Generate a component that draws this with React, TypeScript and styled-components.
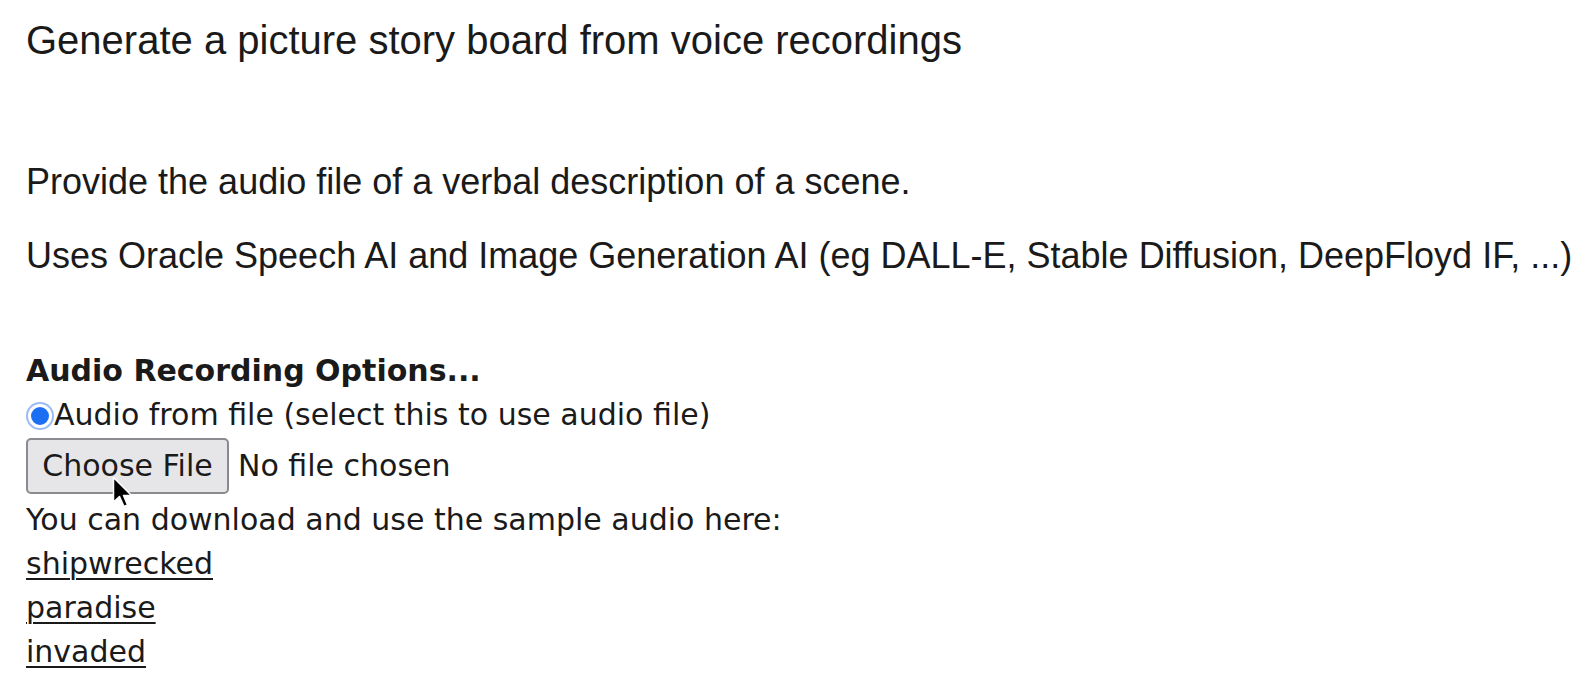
import React from "react";
import styled, { createGlobalStyle } from "styled-components";

const Global = createGlobalStyle`
  html, body { margin: 0; padding: 0; background: #fff; }
  body { font-family: "Liberation Sans", Arial, sans-serif; color: #1a1a1a; }
`;

const Page = styled.div`
  position: relative;
  padding: 16px 0 0 26px;
  width: 1584px;
  height: 700px;
  box-sizing: border-box;
  overflow: hidden;
`;

const Title = styled.div`
  font-size: 40px;
  line-height: 48px;
  white-space: nowrap;
`;

const Para = styled.p<{ $top: number }>`
  margin: ${(p) => p.$top}px 0 0 0;
  font-size: 36px;
  line-height: 44px;
  white-space: nowrap;
`;

const Options = styled.div`
  margin-top: 71px;
  font-family: "DejaVu Sans", Verdana, sans-serif;
  font-size: 30px;
  display: flex;
  flex-direction: column;
  align-items: flex-start;
`;

const Heading = styled.div`
  font-weight: bold;
  line-height: 44px;
`;

const RadioRow = styled.label`
  display: flex;
  align-items: center;
  line-height: 44px;
`;

const Radio = styled.span`
  width: 24px;
  height: 24px;
  border-radius: 50%;
  background: #1c6ef2;
  border: 3px solid #fff;
  box-shadow: 0 0 0 2px #9bbcf5;
  box-sizing: border-box;
  margin: 2px 2px 0 2px;
`;

const FileRow = styled.div`
  display: flex;
  align-items: center;
  gap: 9px;
  margin: 0 0 4px 0;
  height: 57px;
`;

const FileButton = styled.button`
  font-family: "DejaVu Sans", Verdana, sans-serif;
  font-size: 30px;
  color: #1a1a1a;
  background: #e6e6e8;
  border: 2px solid #8a8a8f;
  border-radius: 5px;
  height: 56px;
  width: 203px;
  padding: 0;
  white-space: nowrap;
`;

const Line = styled.div`
  line-height: 44px;
`;

const Link = styled.a`
  color: #1a1a1a;
  text-decoration: underline;
  text-decoration-thickness: 2px;
  text-underline-offset: 4px;
  line-height: 44px;
`;

const Cursor = styled.svg`
  position: absolute;
  left: 112px;
  top: 476px;
`;

export default function App() {
  return (
    <>
      <Global />
      <Page>
        <Title>Generate a picture story board from voice recordings</Title>
        <Para $top={96}>Provide the audio file of a verbal description of a scene.</Para>
        <Para $top={30}>
          Uses Oracle Speech AI and Image Generation AI (eg DALL-E, Stable Diffusion, DeepFloyd IF, ...)
        </Para>
        <Options>
          <Heading>Audio Recording Options...</Heading>
          <RadioRow>
            <Radio />
            Audio from file (select this to use audio file)
          </RadioRow>
          <FileRow>
            <FileButton>Choose File</FileButton>
            <span>No file chosen</span>
          </FileRow>
          <Line>You can download and use the sample audio here:</Line>
          <Link href="#">shipwrecked</Link>
          <Link href="#">paradise</Link>
          <Link href="#">invaded</Link>
        </Options>
        <Cursor width="24" height="34" viewBox="0 0 24 34">
          <path d="M1.5 1.5 L1.5 26 L7.5 20.5 L12 30.5 L15.5 29 L11.5 19.5 L19.5 19.5 Z" fill="#000" stroke="#fff" strokeWidth="1.5" strokeLinejoin="round" />
        </Cursor>
      </Page>
    </>
  );
}
